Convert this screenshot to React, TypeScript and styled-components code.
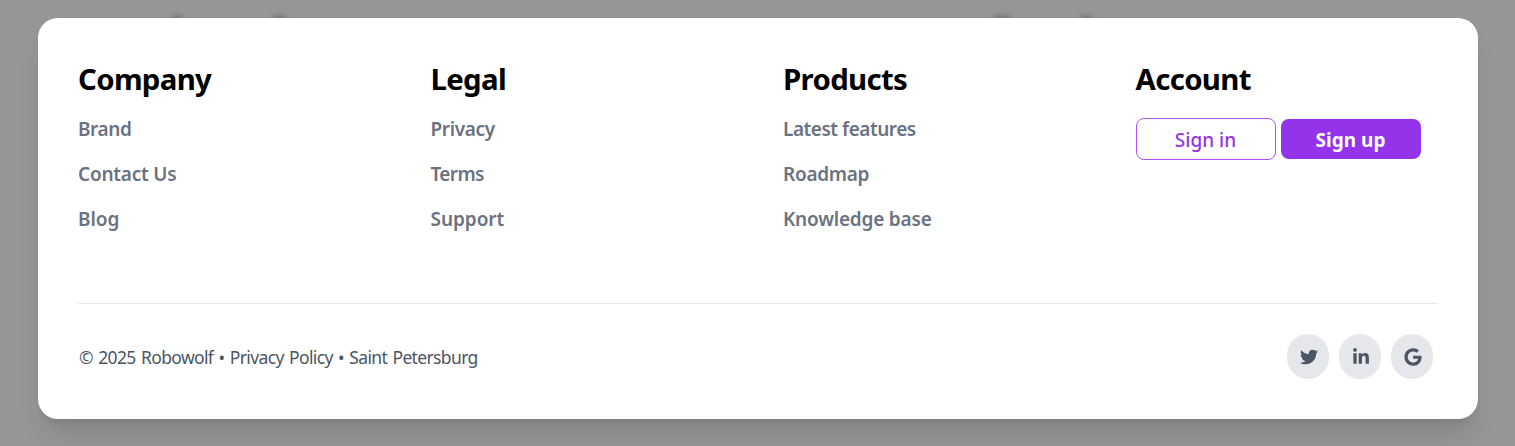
import React from "react";
import styled, { createGlobalStyle } from "styled-components";
import { FaTwitter, FaLinkedinIn, FaGoogle } from "react-icons/fa";

const GlobalStyle = createGlobalStyle`
  * { box-sizing: border-box; }
  body {
    margin: 0;
    background: #959697;
    font-family: "Segoe UI", "Noto Sans", "Open Sans", sans-serif;
    overflow: hidden;
  }
`;

const Page = styled.div`
  position: relative;
  height: 446px;
  padding: 18px 37px 0 38px;
  overflow: hidden;
`;

const Smudge = styled.span<{ $x: number; $w: number }>`
  position: absolute;
  top: 17px;
  left: ${(p) => p.$x}px;
  width: ${(p) => p.$w}px;
  height: 12px;
  border-radius: 6px;
  background: #606162;
  filter: blur(3px);
`;

const Card = styled.footer`
  position: relative;
  display: flex;
  flex-direction: column;
  height: 401px;
  padding: 40px 40px 0;
  border-radius: 20px;
  background: #fff;
  box-shadow: 0 20px 25px -5px rgba(0, 0, 0, 0.1), 0 8px 10px -6px rgba(0, 0, 0, 0.1);
`;

const Columns = styled.div`
  display: grid;
  grid-template-columns: repeat(4, 1fr);
  column-gap: 50px;
  height: 245px;
`;

const Heading = styled.h2`
  margin: 0 0 16px;
  font-size: 29.4px;
  line-height: 43px;
  font-weight: 700;
  letter-spacing: -0.68px;
  color: #000;
`;

const LinkList = styled.ul`
  display: flex;
  flex-direction: column;
  gap: 20px;
  margin: 0;
  padding: 0;
  list-style: none;
`;

const LinkItem = styled.li<{ $track: number }>`
  font-size: 19px;
  line-height: 25px;
  font-weight: 600;
  letter-spacing: ${(p) => p.$track}px;
  color: #6b7280;
  white-space: nowrap;
`;

const Actions = styled.div`
  display: flex;
  align-items: center;
  gap: 5px;
  padding-top: 1px;
`;

const Button = styled.button<{ $filled?: boolean }>`
  width: 140px;
  height: ${(p) => (p.$filled ? 40 : 42)}px;
  padding: 1px 0 0;
  border: ${(p) => (p.$filled ? "0" : "1px solid #a855f7")};
  border-radius: 8px;
  background: ${(p) => (p.$filled ? "#9333ea" : "#fff")};
  color: ${(p) => (p.$filled ? "#fff" : "#9333ea")};
  font-family: inherit;
  font-size: 19px;
  font-weight: ${(p) => (p.$filled ? 700 : 500)};
`;

const Bottom = styled.div`
  display: flex;
  justify-content: space-between;
  align-items: flex-start;
  padding: 30px 5px 0 0;
  border-top: 1px solid #e5e7eb;
`;

const Copyright = styled.p`
  margin: 0;
  padding-left: 1px;
  font-size: 17.5px;
  line-height: 46px;
  letter-spacing: -0.64px;
  word-spacing: 1.4px;
  color: #4b5563;
`;

const Socials = styled.div`
  display: flex;
  gap: 10px;
`;

const Social = styled.a`
  display: flex;
  align-items: center;
  justify-content: center;
  width: 42px;
  height: 45px;
  padding: 1px 0 0 1px;
  border-radius: 22px;
  background: #e5e7eb;
  color: #4b5563;
  font-size: 18px;
`;

type Group = { title: string; links: [label: string, track: number][] };

const groups: Group[] = [
  { title: "Company", links: [["Brand", -0.4], ["Contact Us", -0.22], ["Blog", -0.05]] },
  { title: "Legal", links: [["Privacy", -0.35], ["Terms", -0.65], ["Support", -0.05]] },
  { title: "Products", links: [["Latest features", -0.47], ["Roadmap", -0.28], ["Knowledge base", -0.2]] },
];

export default function App() {
  return (
    <Page>
      <GlobalStyle />
      <Smudge $x={170} $w={14} />
      <Smudge $x={271} $w={16} />
      <Smudge $x={992} $w={20} />
      <Smudge $x={1079} $w={14} />
      <Card>
        <Columns>
          {groups.map((g) => (
            <div key={g.title}>
              <Heading>{g.title}</Heading>
              <LinkList>
                {g.links.map(([label, track]) => (
                  <LinkItem key={label} $track={track}>{label}</LinkItem>
                ))}
              </LinkList>
            </div>
          ))}
          <div>
            <Heading>Account</Heading>
            <Actions>
              <Button>Sign in</Button>
              <Button $filled>Sign up</Button>
            </Actions>
          </div>
        </Columns>
        <Bottom>
          <Copyright>© 2025 Robowolf • Privacy Policy • Saint Petersburg</Copyright>
          <Socials>
            <Social><FaTwitter /></Social>
            <Social><FaLinkedinIn /></Social>
            <Social><FaGoogle /></Social>
          </Socials>
        </Bottom>
      </Card>
    </Page>
  );
}
